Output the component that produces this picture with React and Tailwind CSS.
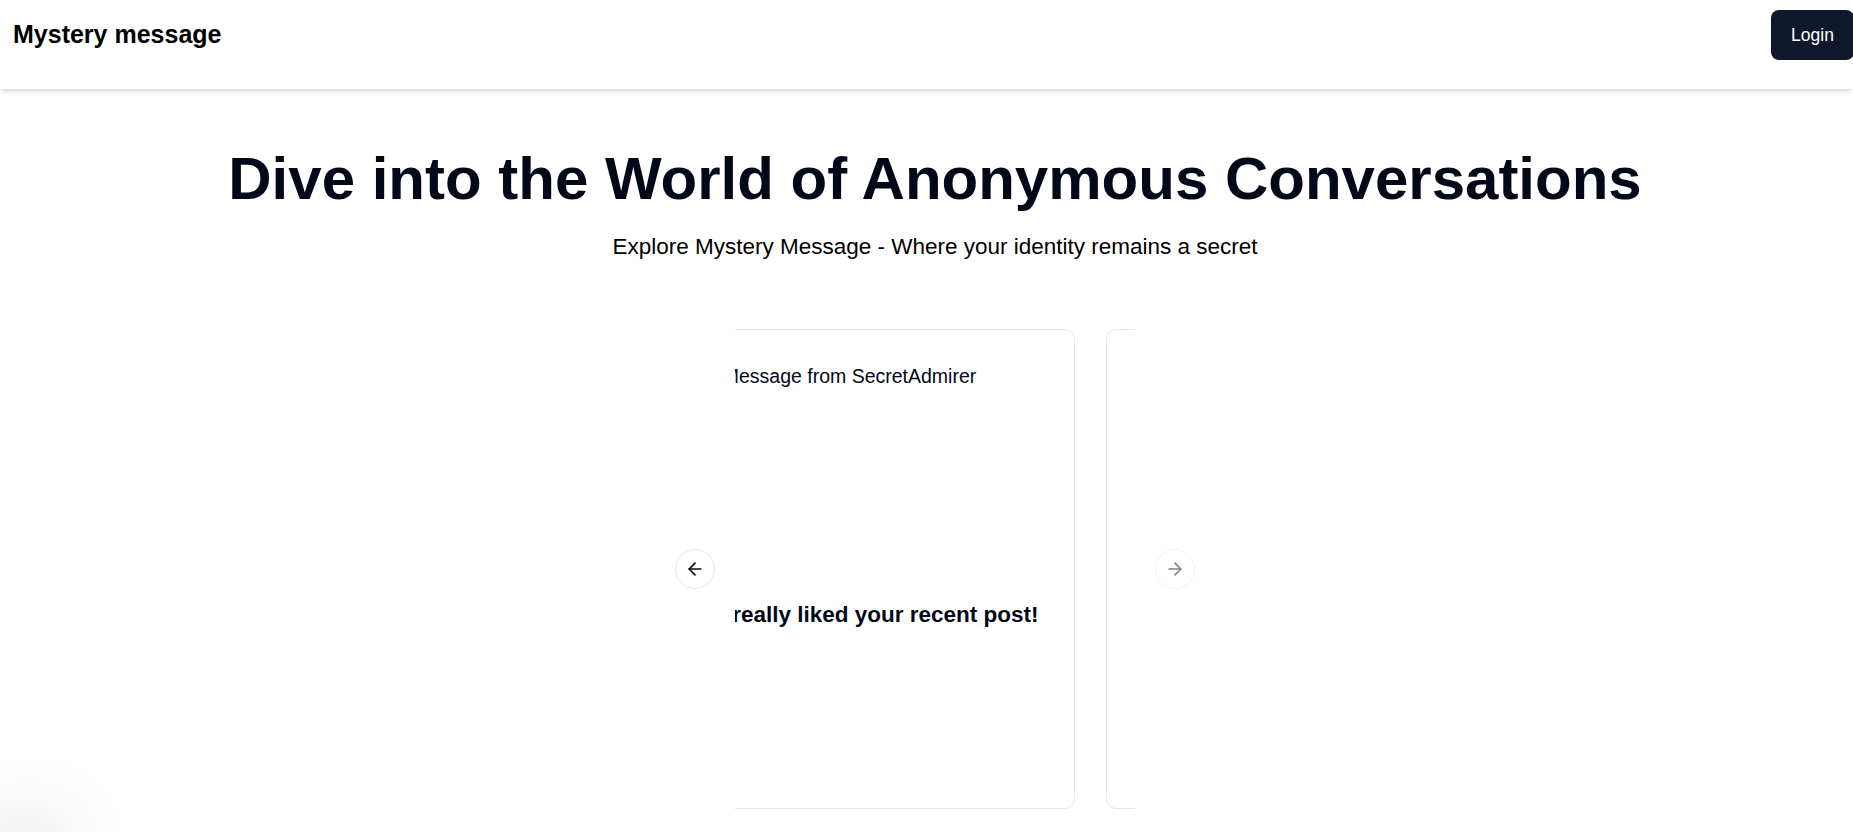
import React from 'react';
import { ArrowLeft, ArrowRight } from 'lucide-react';

const messages = [
  { title: 'Message from SecretAdmirer', content: 'Hey, I really liked your recent post!' },
  { title: 'Message from MysteryGuest', content: 'I have a secret crush on you.' },
];

const App = () => {
  return (
    <div className="relative h-screen overflow-hidden bg-white font-['Liberation_Sans',Arial,sans-serif] text-[#020817]">
      <nav className="relative z-10 flex h-[89px] items-start justify-between bg-white pl-[13px] pt-[10px] shadow-md">
        <div className="flex h-[50px] items-center text-[25px] font-bold text-black">Mystery message</div>
        <button className="-mr-px h-[50px] w-[83px] rounded-[8px] bg-[#0f172a] text-[17.5px] text-white">
          Login
        </button>
      </nav>

      <main className="flex flex-col items-center pl-[17px] pt-[60px]">
        <h1 className="text-center text-[60px] font-bold leading-[60px]">
          Dive into the World of Anonymous Conversations
        </h1>
        <p className="mt-[20px] text-[22.5px] leading-[35px] text-black">
          Explore Mystery Message - Where your identity remains a secret
        </p>

        <div className="relative mt-[60px] w-[400px]">
          <div className="overflow-hidden">
            <div className="-ml-[108px] flex gap-[31px]">
              {messages.map((m, i) => (
                <div key={i} className="shrink-0 py-[5px]">
                  <div className="flex h-[480px] w-[448px] flex-col rounded-[10px] border border-[#e2e8f0] bg-white">
                    <div className="flex h-[92px] items-center justify-center pr-[3px] text-[19.5px] leading-[25px]">
                      {m.title}
                    </div>
                    <div className="flex flex-1 items-center justify-center pl-[4px] text-[22.5px] font-bold">
                      {m.content}
                    </div>
                  </div>
                </div>
              ))}
            </div>
          </div>
          <button className="absolute -left-[60px] top-1/2 flex h-[40px] w-[40px] -translate-y-1/2 items-center justify-center rounded-full border border-[#e2e8f0] bg-white">
            <ArrowLeft className="h-[20px] w-[20px] text-[#020817]" />
          </button>
          <button className="absolute -right-[60px] top-1/2 flex h-[40px] w-[40px] -translate-y-1/2 items-center justify-center rounded-full border border-[#e2e8f0] bg-white opacity-50">
            <ArrowRight className="h-[20px] w-[20px] text-[#020817]" />
          </button>
        </div>
      </main>

      <div className="absolute -bottom-[40px] -left-[30px] h-[70px] w-[110px] rounded-full bg-[#d4d4d4] opacity-30 blur-xl" />
    </div>
  );
};

export default App;
